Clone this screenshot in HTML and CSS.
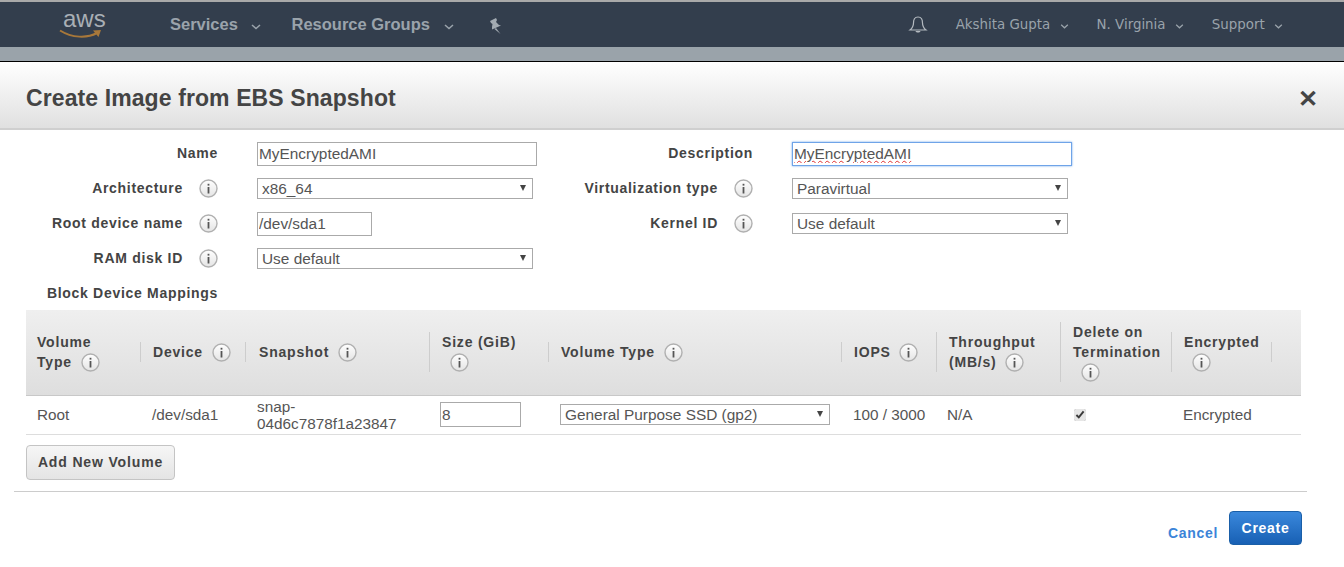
FILE: index.html
```html
<!DOCTYPE html>
<html lang="en">
<head>
    <meta charset="UTF-8">
    <meta name="viewport" content="width=device-width, initial-scale=1.0">
    <title>Create Image from EBS Snapshot</title>
    <link rel="stylesheet" href="styles.css">
</head>
<body>
    <svg class="sprite" width="0" height="0">
        <defs>
            <linearGradient id="infoFill" x1="0" y1="0" x2="0" y2="1">
                <stop offset="0" stop-color="#ffffff"/>
                <stop offset="1" stop-color="#e4e4e4"/>
            </linearGradient>
        </defs>
        <symbol id="info" viewBox="0 0 19 19">
            <circle cx="9.5" cy="9.5" r="8.5" fill="url(#infoFill)" stroke="#b0b0b0" stroke-width="1.4"/>
            <rect x="8.6" y="8" width="1.8" height="6.5" fill="#555"/>
            <rect x="8.6" y="4.8" width="1.8" height="1.8" fill="#555"/>
        </symbol>
        <symbol id="chevron" viewBox="0 0 10 6">
            <path d="M1 1l4 3.600L9 1" fill="none" stroke="#9aa3ab" stroke-width="1.5"/>
        </symbol>
    </svg>

    <header class="topbar">
        <div class="aws-logo">
            <span class="aws-word">aws</span>
            <svg class="aws-smile" width="43" height="10" viewBox="0 0 43 10">
                <path d="M1 1.500c12 7.500 27 8 37 2.500" fill="none" stroke="#a8783a" stroke-width="2"/>
                <path d="M34 1.500l8-.5-2.500 7z" fill="#a8783a"/>
            </svg>
        </div>
        <nav class="main-nav">
            <a href="#">Services <svg class="chev" width="10" height="6"><use href="#chevron"/></svg></a>
            <a href="#">Resource Groups <svg class="chev" width="10" height="6"><use href="#chevron"/></svg></a>
            <svg class="pin" width="14" height="16" viewBox="0 0 14 16">
                <path d="M1 3L7 0l1 2-1 2 3 3 2 .5-9 4V9l.5-3L2 5zM7 10l4.500 6L5.500 11z" fill="#a3abb2"/>
            </svg>
        </nav>
        <div class="user-nav">
            <svg class="bell" width="20" height="20" viewBox="0 0 20 20">
                <path d="M10 2c-3.500 0-4.500 3-4.500 6 0 3-1 5-3.500 7h16c-2.500-2-3.500-4-3.500-7 0-3-1-6-4.500-6z" fill="none" stroke="#b4bac0" stroke-width="1.200"/>
                <path d="M7.500 16c.5 2 4.500 2 5 0z" fill="#b4bac0"/>
            </svg>
            <a href="#">Akshita Gupta <svg class="chev" width="9" height="5"><use href="#chevron"/></svg></a>
            <a href="#">N. Virginia <svg class="chev" width="9" height="5"><use href="#chevron"/></svg></a>
            <a href="#">Support <svg class="chev" width="9" height="5"><use href="#chevron"/></svg></a>
        </div>
    </header>
    <div class="backdrop"></div>

    <main class="modal">
        <div class="modal-head">
            <h1>Create Image from EBS Snapshot</h1>
            <span class="close">&#x2715;</span>
        </div>

        <form class="form-grid">
            <div class="label-cell"><label for="name">Name</label></div>
            <div class="field-cell"><input class="text-box" type="text" id="name" value="MyEncryptedAMI"></div>
            <div class="label-cell"><label for="desc">Description</label></div>
            <div class="field-cell"><input class="text-box focused" type="text" id="desc" value="MyEncryptedAMI"></div>

            <div class="label-cell"><label>Architecture</label><svg class="info"><use href="#info"/></svg></div>
            <div class="field-cell"><div class="select-box"><select><option>x86_64</option></select></div></div>
            <div class="label-cell"><label>Virtualization type</label><svg class="info"><use href="#info"/></svg></div>
            <div class="field-cell"><div class="select-box"><select><option>Paravirtual</option></select></div></div>

            <div class="label-cell"><label>Root device name</label><svg class="info"><use href="#info"/></svg></div>
            <div class="field-cell"><input class="text-box short" type="text" value="/dev/sda1"></div>
            <div class="label-cell"><label>Kernel ID</label><svg class="info"><use href="#info"/></svg></div>
            <div class="field-cell"><div class="select-box"><select><option>Use default</option></select></div></div>

            <div class="label-cell"><label>RAM disk ID</label><svg class="info"><use href="#info"/></svg></div>
            <div class="field-cell"><div class="select-box"><select><option>Use default</option></select></div></div>
            <div class="label-cell"></div>
            <div class="field-cell"></div>

            <div class="label-cell block-label"><label>Block Device Mappings</label></div>
        </form>

        <table class="volumes">
            <colgroup>
                <col class="c-type"><col class="c-device"><col class="c-snap"><col class="c-size"><col class="c-voltype">
                <col class="c-iops"><col class="c-through"><col class="c-delete"><col class="c-enc"><col>
            </colgroup>
            <thead>
                <tr>
                    <th><div class="th-in first">Volume<br>Type <svg class="info"><use href="#info"/></svg></div></th>
                    <th><div class="th-in">Device <svg class="info"><use href="#info"/></svg></div></th>
                    <th><div class="th-in th-snap">Snapshot <svg class="info"><use href="#info"/></svg></div></th>
                    <th><div class="th-in">Size (GiB)<br><svg class="info solo"><use href="#info"/></svg></div></th>
                    <th><div class="th-in">Volume Type <svg class="info"><use href="#info"/></svg></div></th>
                    <th><div class="th-in">IOPS <svg class="info"><use href="#info"/></svg></div></th>
                    <th><div class="th-in">Throughput<br>(MB/s) <svg class="info"><use href="#info"/></svg></div></th>
                    <th><div class="th-in">Delete on<br>Termination<br><svg class="info solo"><use href="#info"/></svg></div></th>
                    <th><div class="th-in">Encrypted<br><svg class="info solo"><use href="#info"/></svg></div></th>
                    <th><div class="th-in th-end">&nbsp;</div></th>
                </tr>
            </thead>
            <tbody>
                <tr>
                    <td class="td-type">Root</td>
                    <td class="td-device">/dev/sda1</td>
                    <td class="td-snap">snap-<br>04d6c7878f1a23847</td>
                    <td class="td-size"><input class="size-box" type="text" value="8"></td>
                    <td class="td-voltype"><div class="select-box wide"><select><option>General Purpose SSD (gp2)</option></select></div></td>
                    <td class="td-iops">100 / 3000</td>
                    <td class="td-through">N/A</td>
                    <td class="td-check"><input class="check" type="checkbox" checked></td>
                    <td class="td-enc">Encrypted</td>
                    <td></td>
                </tr>
            </tbody>
        </table>

        <div class="add-row">
            <button type="button" class="add-btn">Add New Volume</button>
        </div>
        <hr class="rule">

        <div class="modal-foot">
            <a href="#" class="cancel">Cancel</a>
            <button type="button" class="create-btn">Create</button>
        </div>
    </main>
</body>
</html>
```
FILE: styles.css
```css
* {
    margin: 0;
    padding: 0;
    box-sizing: border-box;
}

html, body {
    height: 100%;
    overflow: hidden;
}

body {
    font-family: "Liberation Sans", Arial, sans-serif;
    font-size: 14px;
    color: #444;
    background-color: #ffffff;
}

.sprite {
    display: block;
    height: 0;
}

.topbar {
    height: 47px;
    display: flex;
    align-items: center;
    background-color: #333e4d;
    border-top: 2px solid #a9a9a9;
    padding-left: 63px;
}

.aws-logo {
    width: 107px;
    height: 38px;
    position: relative;
    flex-shrink: 0;
}

.aws-word {
    display: block;
    font-size: 24px;
    line-height: 26px;
    color: #a9afb5;
}

.aws-smile {
    position: absolute;
    left: -4px;
    top: 23px;
}

.main-nav {
    display: flex;
    align-items: center;
    gap: 30px;
}

.main-nav a {
    font-size: 16.5px;
    font-weight: bold;
    color: #9aa3ab;
    text-decoration: none;
}

.chev {
    margin-left: 9px;
    vertical-align: 0;
}

.pin {
    margin-left: 5px;
    margin-top: 3px;
}

.user-nav {
    margin-left: auto;
    display: flex;
    align-items: center;
    padding-right: 61px;
    gap: 28px;
}

.user-nav a {
    font-family: "DejaVu Sans", Verdana, sans-serif;
    font-size: 13.4px;
    color: #9aa3ab;
    text-decoration: none;
}

.user-nav .chev {
    margin-left: 5px;
}

.backdrop {
    height: 15px;
    background-color: #9aa3aa;
    border-bottom: 1px solid #000;
}

.modal-head {
    height: 68px;
    display: flex;
    align-items: center;
    justify-content: space-between;
    padding: 7px 26px 0 26px;
    background: linear-gradient(#ffffff, #e0e0e0);
    border-bottom: 2px solid #cfcfcf;
}

.modal-head h1 {
    font-size: 23px;
    letter-spacing: 0.1px;
    color: #444;
    font-weight: bold;
}

.close {
    font-size: 24px;
    line-height: 25px;
    font-weight: bold;
    color: #444;
}

.form-grid {
    display: grid;
    grid-template-columns: 257px 280px 255px 280px;
    grid-auto-rows: 35px;
    padding-top: 6px;
}

.label-cell {
    display: flex;
    align-items: center;
    justify-content: flex-end;
    gap: 16px;
    padding-right: 39px;
}

.label-cell label {
    font-weight: bold;
    color: #444;
    letter-spacing: 0.7px;
    padding-bottom: 1px;
}

.block-label {
    height: 34px;
}

.field-cell {
    display: flex;
    align-items: center;
}

.text-box {
    width: 100%;
    height: 24px;
    border: 1px solid #aaa;
    padding: 0 1px;
    font-family: inherit;
    font-size: 15.4px;
    color: #555;
    outline: none;
}

.text-box.short {
    width: 115px;
}

.text-box.focused {
    border: 1px solid #6fa4e8;
    box-shadow: 0 0 2px #6fa4e8;
    line-height: 22px;
    text-decoration: underline wavy #e03030 1px;
}

.select-box {
    width: 276px;
    height: 21px;
    position: relative;
}

.select-box.wide {
    width: 270px;
}

.select-box::after {
    content: "";
    position: absolute;
    right: 7px;
    top: 7px;
    border-left: 3.500px solid transparent;
    border-right: 3.500px solid transparent;
    border-top: 6px solid #444;
    pointer-events: none;
}

.select-box select {
    appearance: none;
    width: 100%;
    height: 100%;
    border: 1px solid #aaa;
    border-radius: 0;
    background-color: #fff;
    padding-left: 4px;
    font-family: inherit;
    font-size: 15.4px;
    color: #555;
    outline: none;
}

.info {
    width: 19px;
    height: 19px;
    flex-shrink: 0;
    vertical-align: -5px;
}

.th-in .info {
    margin-left: 4px;
}

.th-in .info.solo {
    margin-left: 8px;
}

.volumes {
    width: 1275px;
    margin-left: 26px;
    margin-top: -1px;
    border-collapse: collapse;
    table-layout: fixed;
}

.c-type { width: 114px; }
.c-device { width: 105px; }
.c-snap { width: 184px; }
.c-size { width: 119px; }
.c-voltype { width: 293px; }
.c-iops { width: 95px; }
.c-through { width: 124px; }
.c-delete { width: 111px; }
.c-enc { width: 100px; }

.volumes thead tr {
    height: 85px;
    background: linear-gradient(#efefef, #dedede);
}

.volumes th {
    border-bottom: 1px solid #c8c8c8;
    text-align: left;
    vertical-align: middle;
    font-size: 14px;
    letter-spacing: 0.8px;
    line-height: 20px;
    color: #444;
}

.th-in {
    border-left: 1px solid #cdcdcd;
    padding-left: 12px;
}

.th-in.first {
    border-left: none;
    padding-left: 11px;
}

.th-in.th-snap {
    padding-left: 13px;
}

.th-end {
    padding-left: 0;
}

.volumes td {
    height: 39px;
    border-bottom: 1px solid #ddd;
    font-size: 15.3px;
    line-height: 17px;
    color: #555;
}

.td-type { padding-left: 11px; }
.td-device { padding-left: 12px; }
.td-snap { padding-left: 12px; }
.td-size { padding-left: 11px; }
.td-voltype { padding-left: 12px; }
.td-iops { padding-left: 12px; }
.td-through { padding-left: 11px; }
.td-check { padding-left: 14px; }
.td-enc { padding-left: 12px; }

.size-box {
    width: 81px;
    height: 25px;
    display: block;
    border: 1px solid #aaa;
    padding-left: 1px;
    font-family: inherit;
    font-size: 15.4px;
    color: #555;
    outline: none;
}

.check {
    width: 12px;
    height: 12px;
    display: block;
    accent-color: #e6e6e6;
}

.add-row {
    padding: 10px 0 11px 26px;
}

.add-btn {
    width: 149px;
    height: 35px;
    border: 1px solid #c4c4c4;
    border-radius: 4px;
    background: linear-gradient(#f6f6f6, #e4e4e4);
    font-family: inherit;
    font-size: 14px;
    font-weight: bold;
    letter-spacing: 0.85px;
    color: #444;
}

.rule {
    width: 1293px;
    margin-left: 14px;
    border: none;
    border-top: 1px solid #ccc;
}

.modal-foot {
    display: flex;
    justify-content: flex-end;
    align-items: flex-end;
    gap: 11px;
    padding: 19px 42px 0 0;
}

.cancel {
    font-size: 14px;
    font-weight: bold;
    letter-spacing: 0.7px;
    color: #3b84d8;
    text-decoration: none;
    line-height: 16px;
    margin-bottom: 4px;
}

.create-btn {
    width: 73px;
    height: 34px;
    border: 1px solid #1a5fa8;
    border-radius: 4px;
    background: linear-gradient(#3a88dc, #1860b4);
    font-family: inherit;
    font-size: 14px;
    font-weight: bold;
    letter-spacing: 0.7px;
    color: #fff;
}
```
